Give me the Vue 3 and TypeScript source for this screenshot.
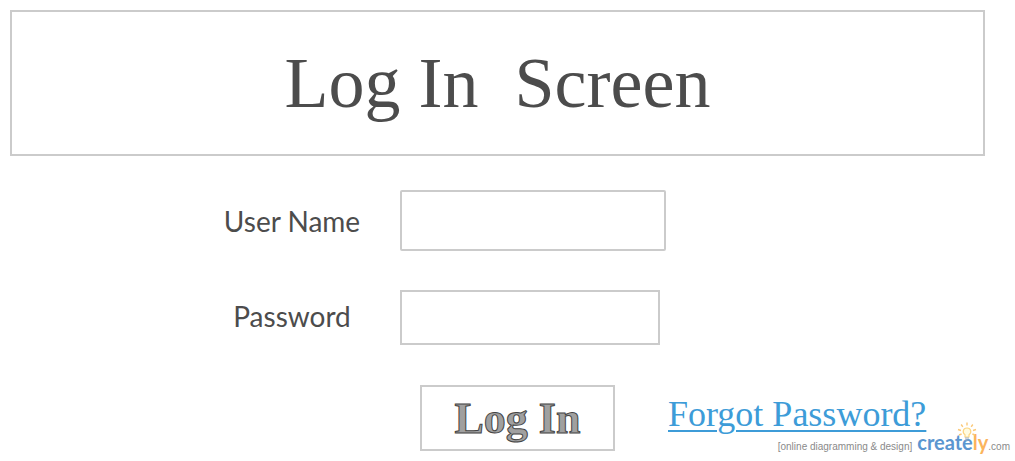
<script setup lang="ts">
import { ref } from 'vue'

const userName = ref('')
const password = ref('')
</script>

<template>
  <main class="page">
    <header class="banner">
      <h1 class="title">Log In&nbsp; Screen</h1>
    </header>

    <form class="form" @submit.prevent>
      <label class="label label-user" for="user-name">User Name</label>
      <input id="user-name" v-model="userName" class="field field-user" type="text" />

      <label class="label label-password" for="password">Password</label>
      <input id="password" v-model="password" class="field field-password" type="password" />

      <div class="actions">
        <button class="submit" type="submit">Log In</button>
        <a class="forgot" href="#">Forgot Password?</a>
      </div>
    </form>

    <footer class="credit">
      <span class="tagline">[online diagramming &amp; design]</span>
      <span class="brand">
        <svg class="bulb" viewBox="0 0 20 20" aria-hidden="true">
          <g fill="none" stroke="#fbc878" stroke-width="1.4">
            <path d="M10 0.5v3M4.2 2.5l1.6 2.4M15.8 2.5l-1.6 2.4M1 7.5l3 1M19 7.5l-3 1M2 13l2.6-1M18 13l-2.6-1" />
          </g>
          <path d="M8 15v-2.2C5.2 11 5.6 6 10 6s4.8 5 2 6.8V15z" fill="#fffbe0" stroke="#fcd582" stroke-width="1.2" />
          <path d="M8 16h4M8.5 18h3" stroke="#9aa9bb" stroke-width="1.2" />
        </svg>
        <span class="brand-blue">create</span><span class="brand-orange">ly</span>
      </span>
      <span class="domain">.com</span>
    </footer>
  </main>
</template>

<style>
body {
  margin: 0;
  background: #fff;
}
</style>

<style scoped>
.page {
  position: relative;
  box-sizing: border-box;
  min-height: 100vh;
  padding: 10px 30px 10px 10px;
  color: #4c4c4c;
}

.banner {
  padding: 31px 0;
  border: 2px solid #cbcbcb;
  text-align: center;
}

.title {
  margin: 0;
  font: 400 72px/80px "Liberation Serif", serif;
}

.form {
  display: grid;
  grid-template-columns: 216px 1fr;
  align-items: center;
  margin: 34px 0 0 174px;
}

.label {
  font: 400 28px/34px Lato, sans-serif;
  text-align: center;
}

.field {
  box-sizing: border-box;
  padding: 0 12px;
  border: 2px solid #cbcbcb;
  background: #fff;
  color: inherit;
  font: 400 28px/34px Lato, sans-serif;
}

.field-user {
  width: 266px;
  height: 61px;
  border-radius: 2px;
}

.field-password {
  width: 260px;
  height: 55px;
}

.field-user,
.label-user {
  margin-bottom: 39px;
}

.label-password {
  padding-bottom: 4px;
}

.actions {
  display: flex;
  grid-column: 2;
  align-items: center;
  gap: 53px;
  margin: 40px 0 0 20px;
}

.submit {
  box-sizing: border-box;
  width: 195px;
  height: 66px;
  padding: 2px 0 0;
  border: 2px solid #cbcbcb;
  background: #fff;
  color: #a0a0a0;
  font: 700 44px/48px "Liberation Serif", serif;
  -webkit-text-stroke: 1px #444;
}

.forgot {
  padding-bottom: 8px;
  color: #3d9cd8;
  font: 400 36px/40px "Liberation Serif", serif;
  text-decoration-thickness: 2px;
  text-underline-offset: 4px;
  white-space: nowrap;
}

.credit {
  position: absolute;
  right: 5px;
  bottom: 0;
  display: flex;
  align-items: baseline;
  color: #8a8a8a;
  font: 400 10px/28px "Liberation Sans", sans-serif;
}

.brand {
  position: relative;
  margin-left: 5px;
  font: 700 20px/28px Lato, sans-serif;
}

.brand-blue {
  color: #5b96d0;
}

.brand-orange {
  color: #fbb45c;
}

.bulb {
  position: absolute;
  top: -6px;
  right: 11px;
  width: 20px;
  height: 20px;
}
</style>
